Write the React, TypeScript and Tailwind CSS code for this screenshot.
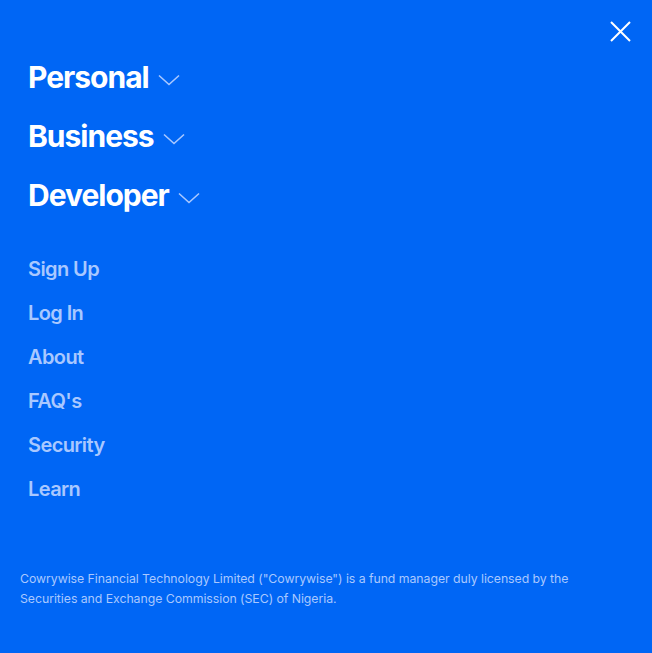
import React from "react";

const Chevron = () => (
  <svg width="22" height="12" viewBox="0 0 22 12" fill="none" className="ml-[9px] mt-[6px]">
    <path d="M1 1.5 L11 10.5 L21 1.5" stroke="#a9c8ff" strokeWidth="1.6" />
  </svg>
);

export default function App() {
  const main = ["Personal", "Business", "Developer"];
  const links = ["Sign Up", "Log In", "About", "FAQ's", "Security", "Learn"];
  return (
    <div
      className="w-[652px] h-[653px] bg-[#0066f5] relative flex flex-col"
      style={{ fontFamily: "Inter, 'Noto Sans', sans-serif" }}
    >
      <button className="absolute right-[21px] top-[21px] w-[21px] h-[21px]">
        <svg width="21" height="21" viewBox="0 0 21 21">
          <path d="M1 1 L20 20 M20 1 L1 20" stroke="white" strokeWidth="2" />
        </svg>
      </button>
      <div className="pl-[28px] pt-[58px] flex flex-col gap-[21px]">
        {main.map((m) => (
          <div key={m} className="flex items-center h-[38px]">
            <span className="text-white font-bold text-[30px] tracking-[-1px] leading-none">{m}</span>
            <Chevron />
          </div>
        ))}
      </div>
      <div className="pl-[28px] pt-[43px] flex flex-col gap-[20px]">
        {links.map((l) => (
          <div key={l} className="h-[24px] flex items-center text-[#a9c8ff] font-semibold text-[20px] tracking-[-0.6px] leading-none">
            {l}
          </div>
        ))}
      </div>
      <p className="pl-[20px] pr-[60px] mt-[68px] text-[12.3px] leading-[20px] text-[#a9c8ff] tracking-[-0.05px]">
        Cowrywise Financial Technology Limited ("Cowrywise") is a fund manager duly licensed by the Securities and Exchange Commission (SEC) of Nigeria.
      </p>
    </div>
  );
}
